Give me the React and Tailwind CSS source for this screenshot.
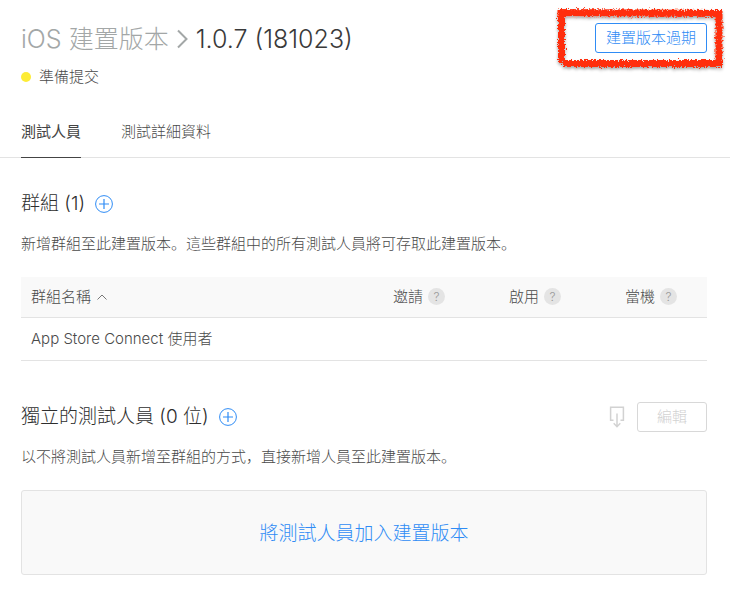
import React, { useState } from 'react';

const tabs = ['測試人員', '測試詳細資料'];
const columns = ['邀請', '啟用', '當機'];
const groups = ['App Store Connect 使用者'];

const PlusIcon = () => (
    <svg className="w-[18px] h-[18px]" viewBox="0 0 18 18" fill="none" stroke="#2f8cf5">
        <circle cx="9" cy="9" r="8.4" />
        <path d="M9 4v10M4 9h10" strokeWidth="1.2" />
    </svg>
);

const DownloadIcon = () => (
    <svg className="w-4 h-[22px]" viewBox="0 0 16 22" fill="none" stroke="#d2d2d2" strokeWidth="1.5">
        <path d="M4.5 14.2H1.6V1.2h12.8v13h-2.9" />
        <path d="M8 7.5v13M4.7 17.3 8 20.7l3.3-3.4" />
    </svg>
);

// Rough crayon frame around the expire button
const CrayonFrame = () => (
    <svg
        className="absolute -left-[44px] -top-[22px] w-[178px] h-[74px] pointer-events-none"
        viewBox="0 0 178 74"
        fill="none"
        aria-hidden="true"
    >
        <defs>
            <filter id="crayon" x="0" y="0" width="178" height="74" filterUnits="userSpaceOnUse">
                <feTurbulence type="fractalNoise" baseFrequency="0.6" numOctaves="2" seed="4" result="noise" />
                <feDisplacementMap in="SourceGraphic" in2="noise" scale="6" xChannelSelector="R" yChannelSelector="G" result="rough" />
                <feGaussianBlur in="rough" stdDeviation="0.4" result="soft" />
                <feDropShadow in="soft" dx="0" dy="2" stdDeviation="1.5" floodColor="#000" floodOpacity="0.35" />
            </filter>
        </defs>
        <g filter="url(#crayon)" stroke="#ff2f0d" strokeWidth="7">
            <path d="M6.500 11.500 170 12.500" />
            <path d="M168 9v56" />
            <path d="M12 62.500h160" />
            <path d="M10.500 9v53" />
        </g>
    </svg>
);

const SectionTitle = ({ title, label }) => (
    <div className="flex items-center gap-[10px]">
        <h2 className="text-[19px] leading-[30px] text-[#2e2e2e]">{title}</h2>
        <button type="button" aria-label={label}>
            <PlusIcon />
        </button>
    </div>
);

export default function App() {
    const [activeTab, setActiveTab] = useState(tabs[0]);

    return (
        <div className="min-h-screen bg-white pb-4 font-light text-[15px] leading-[22px] text-[#4a4a4a] font-[Inter,'Noto_Sans_CJK_SC',sans-serif]">
            <header className="pt-[23px] pl-[21px] pr-[23px]">
                <div className="flex items-start justify-between">
                    <h1 className="flex items-center text-[25px] leading-8 text-[#3a3a3a]">
                        <a href="#builds" className="text-[#a3a7a7]">iOS 建置版本</a>
                        <svg className="w-[11px] h-5 mx-2" viewBox="0 0 11 20" fill="none" stroke="#a3a7a7" strokeWidth="2">
                            <path d="m1 1.500 8.500 8.500L1 18.500" />
                        </svg>
                        <span>1.0.7 (181023)</span>
                    </h1>
                    <div className="relative">
                        <button type="button" className="block h-[30px] px-[10px] border border-[#2f8cf5] rounded-[3px] text-[#2f8cf5]">
                            建置版本過期
                        </button>
                        <CrayonFrame />
                    </div>
                </div>
                <p className="flex items-center gap-2 mt-[11px]">
                    <span className="w-[10px] h-[10px] rounded-full bg-[#fdec36]" />
                    準備提交
                </p>
            </header>

            <nav className="flex gap-10 mt-[33px] px-[21px] border-b border-[#e3e3e3]">
                {tabs.map(tab => (
                    <button
                        key={tab}
                        type="button"
                        onClick={() => setActiveTab(tab)}
                        className={`pb-[14px] -mb-px border-b ${tab === activeTab ? 'border-[#444] font-normal text-[#444]' : 'border-transparent'}`}
                    >
                        {tab}
                    </button>
                ))}
            </nav>

            <main className="pl-[21px] pr-[23px]">
                <section className="mt-[31px]">
                    <SectionTitle title="群組 (1)" label="新增群組" />
                    <p className="mt-[14px]">新增群組至此建置版本。這些群組中的所有測試人員將可存取此建置版本。</p>
                    <table className="w-full mt-[22px] text-left">
                        <thead className="bg-[#f9f9f9]">
                            <tr className="h-[40px] border-b border-[#e3e3e3]">
                                <th className="pl-[10px] font-light">
                                    <button type="button" className="flex items-center gap-[6px]">
                                        群組名稱
                                        <svg className="w-[10px] h-[6px]" viewBox="0 0 10 6" fill="none" stroke="#777">
                                            <path d="M.5 5.500 5 1l4.500 4.500" />
                                        </svg>
                                    </button>
                                </th>
                                {columns.map(column => (
                                    <th key={column} className="w-[116px] pr-[30px] font-light">
                                        <div className="flex items-center justify-end gap-[5px]">
                                            {column}
                                            <button
                                                type="button"
                                                aria-label={`${column}說明`}
                                                className="w-[17px] h-[17px] rounded-full bg-[#e4e4e4] text-[12px] leading-[17px] text-[#999]"
                                            >
                                                ?
                                            </button>
                                        </div>
                                    </th>
                                ))}
                            </tr>
                        </thead>
                        <tbody>
                            {groups.map(group => (
                                <tr key={group} className="h-[43px] border-b border-[#e3e3e3]">
                                    <td className="pl-[10px]" colSpan="4">{group}</td>
                                </tr>
                            ))}
                        </tbody>
                    </table>
                </section>

                <section className="mt-[41px]">
                    <div className="flex items-center justify-between">
                        <SectionTitle title="獨立的測試人員 (0 位)" label="新增測試人員" />
                        <div className="flex items-center gap-3">
                            <button type="button" aria-label="下載" disabled>
                                <DownloadIcon />
                            </button>
                            <button type="button" disabled className="w-[70px] h-[30px] border border-[#d8d8d8] rounded-[3px] text-[#d2d2d2]">
                                編輯
                            </button>
                        </div>
                    </div>
                    <p className="mt-[14px]">以不將測試人員新增至群組的方式，直接新增人員至此建置版本。</p>
                    <div className="flex justify-center pt-7 pb-[25px] mt-[22px] border border-[#e3e3e3] rounded-[3px] bg-[#f9f9f9]">
                        <a href="#add-testers" className="text-[19px] leading-[30px] text-[#2f8cf5]">將測試人員加入建置版本</a>
                    </div>
                </section>
            </main>
        </div>
    );
}
